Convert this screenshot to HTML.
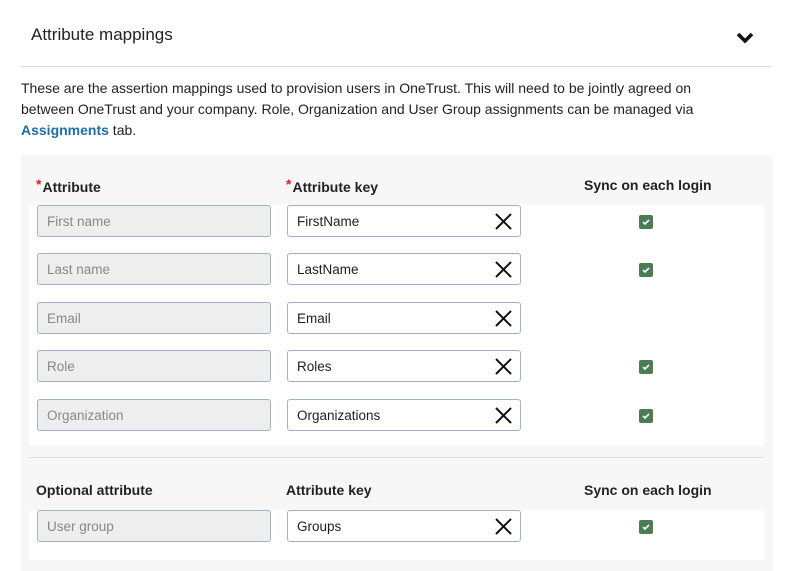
<!DOCTYPE html>
<html><head><style>
body{margin:0;width:793px;height:571px;background:#fff;font-family:"Liberation Sans",sans-serif;color:#1f1f1f;position:relative;overflow:hidden}
.a{position:absolute}
.inp{position:absolute;border:1px solid #9fb3cc;border-radius:3px;box-sizing:border-box;height:32px;width:234px;font-size:13.5px;line-height:31px;padding-left:9px}
.dis{background:#eeeeee;color:#888}
.key{background:#fff;color:#1f1f1f}
.x{position:absolute;right:8px;top:7px}
.cb{position:absolute;left:639px;width:14px;height:14px;background:#4b7d55;border-radius:2px}
.cb svg{position:absolute;left:3px;top:3px}
.h{position:absolute;font-size:14px;font-weight:bold;color:#222}
.star{color:#e02020;font-size:14px;vertical-align:3px;margin-right:1px}
</style></head><body>
<div class="a" style="left:31px;top:25px;font-size:17px;color:#222">Attribute mappings</div>
<svg class="a" style="left:736px;top:32px" width="18" height="13" viewBox="0 0 18 13"><path d="M2 2l7 7 7-7" stroke="#111" stroke-width="3.6" fill="none"/></svg>
<div class="a" style="left:21px;top:66px;width:750px;height:1px;background:#dcdcdc"></div>
<div class="a" style="left:21px;top:78px;width:712px;font-size:14px;line-height:21px;color:#222">These are the assertion mappings used to provision users in OneTrust. This will need to be jointly agreed on between OneTrust and your company. Role, Organization and User Group assignments can be managed via <span style="color:#1f6fa3;font-weight:bold">Assignments</span> tab.</div>
<div class="a" style="left:21px;top:155px;width:752px;height:416px;background:#f7f7f7"></div>
<div class="a" style="left:29px;top:205px;width:735px;height:241px;background:#fff"></div>
<div class="a" style="left:29px;top:457px;width:735px;height:1px;background:#ddd"></div>
<div class="a" style="left:29px;top:510px;width:735px;height:50px;background:#fff"></div>
<div class="h" style="left:36px;top:176px"><span class="star">*</span>Attribute</div>
<div class="h" style="left:286px;top:176px"><span class="star">*</span>Attribute key</div>
<div class="h" style="left:584px;top:177px">Sync on each login</div>
<div class="h" style="left:36px;top:482px">Optional attribute</div>
<div class="h" style="left:286px;top:482px">Attribute key</div>
<div class="h" style="left:584px;top:482px">Sync on each login</div>

<div class="inp dis" style="left:37px;top:205px">First name</div>
<div class="inp key" style="left:287px;top:205px">FirstName<svg class="x" width="17" height="17"><path d="M1 1L16 16M16 1L1 16" stroke="#111" stroke-width="2"/></svg></div>
<div class="cb" style="top:215px"><svg width="8" height="8"><path d="M1 4l2 2 4-4" stroke="#fff" stroke-width="1.6" fill="none"/></svg></div>

<div class="inp dis" style="left:37px;top:253px">Last name</div>
<div class="inp key" style="left:287px;top:253px">LastName<svg class="x" width="17" height="17"><path d="M1 1L16 16M16 1L1 16" stroke="#111" stroke-width="2"/></svg></div>
<div class="cb" style="top:263px"><svg width="8" height="8"><path d="M1 4l2 2 4-4" stroke="#fff" stroke-width="1.6" fill="none"/></svg></div>

<div class="inp dis" style="left:37px;top:302px">Email</div>
<div class="inp key" style="left:287px;top:302px">Email<svg class="x" width="17" height="17"><path d="M1 1L16 16M16 1L1 16" stroke="#111" stroke-width="2"/></svg></div>

<div class="inp dis" style="left:37px;top:350px">Role</div>
<div class="inp key" style="left:287px;top:350px">Roles<svg class="x" width="17" height="17"><path d="M1 1L16 16M16 1L1 16" stroke="#111" stroke-width="2"/></svg></div>
<div class="cb" style="top:360px"><svg width="8" height="8"><path d="M1 4l2 2 4-4" stroke="#fff" stroke-width="1.6" fill="none"/></svg></div>

<div class="inp dis" style="left:37px;top:399px">Organization</div>
<div class="inp key" style="left:287px;top:399px">Organizations<svg class="x" width="17" height="17"><path d="M1 1L16 16M16 1L1 16" stroke="#111" stroke-width="2"/></svg></div>
<div class="cb" style="top:409px"><svg width="8" height="8"><path d="M1 4l2 2 4-4" stroke="#fff" stroke-width="1.6" fill="none"/></svg></div>

<div class="inp dis" style="left:37px;top:510px">User group</div>
<div class="inp key" style="left:287px;top:510px">Groups<svg class="x" width="17" height="17"><path d="M1 1L16 16M16 1L1 16" stroke="#111" stroke-width="2"/></svg></div>
<div class="cb" style="top:520px"><svg width="8" height="8"><path d="M1 4l2 2 4-4" stroke="#fff" stroke-width="1.6" fill="none"/></svg></div>
</body></html>
